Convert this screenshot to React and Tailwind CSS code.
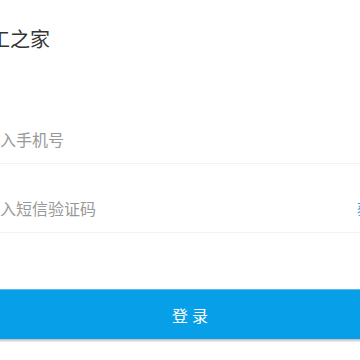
export default function App() {
  return (
    <div className="w-[360px] h-[360px] overflow-hidden bg-white font-['Noto_Sans_CJK_SC','Noto_Sans',sans-serif]">
      <div className="ml-[-32px] w-[480px]">
        <h1 className="pt-[27px] pl-[2px] text-[20px] leading-[24px] font-normal text-[#333]">员工之家</h1>

        <div className="mt-[44px]">
          <div className="flex items-center h-[69px] pt-[32px] pb-[12px] border-b border-[#f2f2f2]">
            <span className="text-[16px] leading-[24px] text-[#999]">请输入手机号</span>
          </div>
          <div className="flex items-center h-[69px] pt-[32px] pb-[12px] border-b border-[#f2f2f2]">
            <span className="w-[389px] shrink-0 text-[16px] leading-[24px] text-[#999]">请输入短信验证码</span>
            <button className="text-[14px] leading-[24px] text-[#1ba1e8]">获取验证码</button>
          </div>
        </div>

        <button className="mt-[56px] w-[448px] h-[50px] bg-[#07a0e8] border-t border-[#5cbcef] shadow-[0_2px_2px_rgba(0,0,0,0.25)] text-white text-[16px] tracking-[4px]">
          登录
        </button>
      </div>
    </div>
  )
}
